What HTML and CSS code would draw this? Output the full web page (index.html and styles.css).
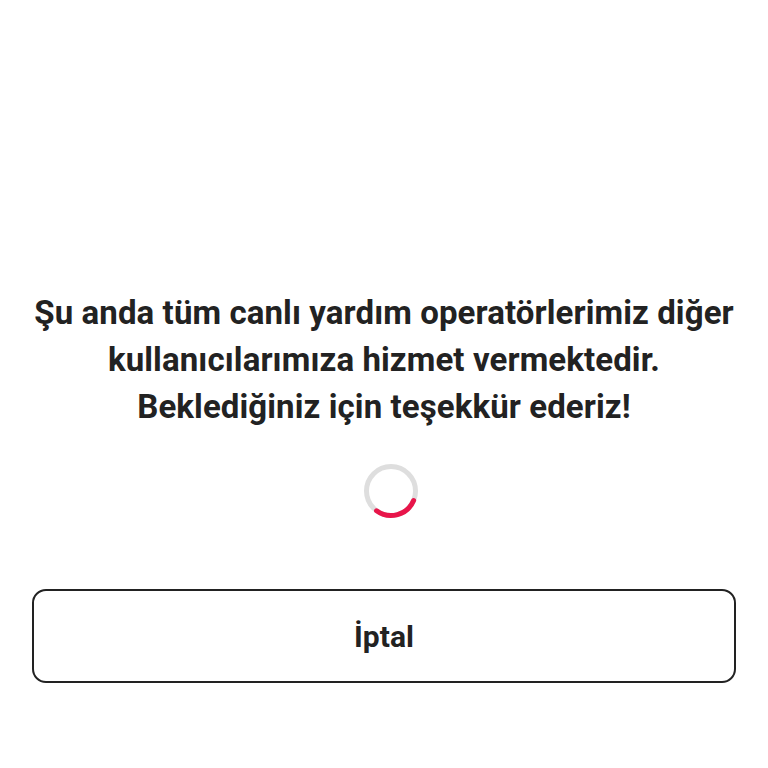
FILE: index.html
```html
<!DOCTYPE html>
<html lang="tr">
  <head>
    <meta charset="UTF-8" />
    <meta name="viewport" content="width=device-width, initial-scale=1.0" />
    <title>Canlı Yardım</title>
    <link rel="stylesheet" href="styles.css">
  </head>
  <body>
    <div id="wait">
      <p class="message">
        Şu anda tüm canlı yardım operatörlerimiz diğer<br />
        kullanıcılarımıza hizmet vermektedir.<br />
        Beklediğiniz için teşekkür ederiz!
      </p>
      <div class="spinner">
        <svg width="56" height="56" viewBox="0 0 56 56">
          <circle cx="28" cy="28" r="24.5" fill="none" stroke="#dedede" stroke-width="5" />
          <path d="M50.6 37.6 A24.5 24.5 0 0 1 13.6 47.8" fill="none" stroke="#e8154a" stroke-width="5" stroke-linecap="round" />
        </svg>
      </div>
      <button id="cancel">İptal</button>
    </div>
  </body>
</html>
```

FILE: styles.css
```css
body {
  margin: 0;
  background: #fff;
  font-family: Roboto, "Liberation Sans", sans-serif;
  color: #222;
}
#wait {
  display: flex;
  flex-direction: column;
  align-items: center;
  padding: 289px 32px 0;
}
.message {
  margin: 0;
  font-size: 33px;
  font-weight: 700;
  line-height: 47px;
  letter-spacing: 0.1px;
  text-align: center;
  white-space: nowrap;
}
.spinner {
  margin-top: 33px;
  width: 56px;
  height: 56px;
  margin-left: 14px;
}
#cancel {
  margin-top: 70px;
  width: 704px;
  height: 94px;
  border: 2px solid #222;
  border-radius: 14px;
  background: #fff;
  font-family: Roboto, "Liberation Sans", sans-serif;
  font-size: 30px;
  font-weight: 700;
  color: #222;
}
```
